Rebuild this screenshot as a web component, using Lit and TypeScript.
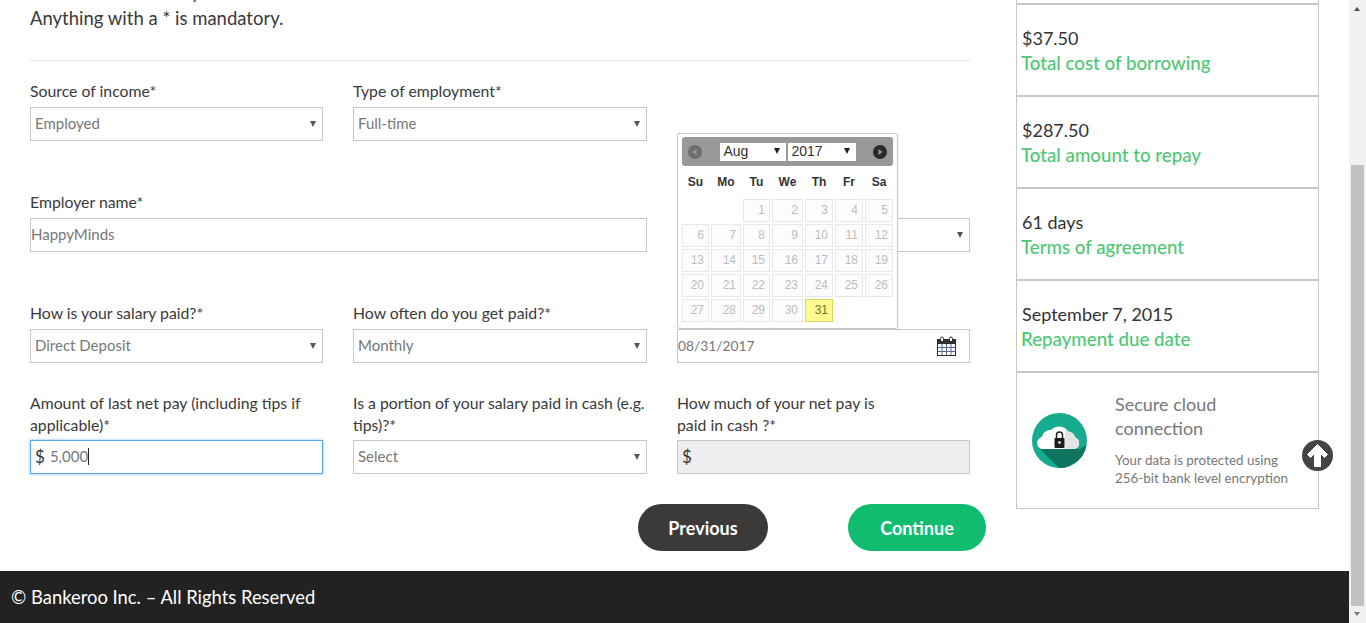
import { LitElement, html, css } from 'lit';
import { customElement } from 'lit/decorators.js';

const WEEKDAYS = ['Su', 'Mo', 'Tu', 'We', 'Th', 'Fr', 'Sa'];
const SUMMARY = [
  { value: '$37.50', label: 'Total cost of borrowing' },
  { value: '$287.50', label: 'Total amount to repay' },
  { value: '61 days', label: 'Terms of agreement' },
  { value: 'September 7, 2015', label: 'Repayment due date' }
];

@customElement('app-root')
export class AppRoot extends LitElement {
  static styles = css`
    :host {
      display: block;
      position: relative;
      height: 623px;
      overflow: hidden;
      background: #fff;
      font-family: "Lato", "Open Sans", sans-serif;
      color: #3a3a3a;
    }
    .page {
      width: 1349px;
      height: 623px;
      display: flex;
      flex-direction: column;
    }
    .content {
      flex: 1;
      min-height: 0;
      display: flex;
      padding-left: 30px;
    }
    .form {
      width: 940px;
    }
    .intro {
      margin: -21px 0 0;
      font-size: 18.5px;
      line-height: 26px;
      padding-bottom: 29px;
      border-bottom: 1px solid #e4e4e4;
    }
    .row {
      display: grid;
      grid-template-columns: 293px 294px 293px;
      column-gap: 30px;
      margin-top: 50px;
    }
    .row.first { margin-top: 19px; }
    .row.tight { margin-top: 29px; }
    .field {
      position: relative;
      display: flex;
      flex-direction: column;
      justify-content: flex-end;
      min-width: 0;
    }
    .wide { grid-column: span 2; }
    label {
      display: block;
      font-size: 15.8px;
      line-height: 22px;
      margin-bottom: 5px;
    }
    .two-line label { margin-bottom: 4px; }
    .control {
      box-sizing: border-box;
      height: 34px;
      border: 1px solid #c8c8c8;
      background: #fff;
      display: flex;
      align-items: center;
      padding: 0 4px 2px;
      font-size: 15px;
      color: #777;
    }
    .control .value { flex: 1; }
    .control.flush { padding-left: 0; }
    .arrow {
      width: 0;
      height: 0;
      border-left: 3px solid transparent;
      border-right: 3px solid transparent;
      border-top: 6px solid #555;
      margin: 2px 2px 0 0;
    }
    .focused {
      border-color: #58a9ee;
      box-shadow: 0 0 3px rgba(88, 169, 238, 0.7);
    }
    .disabled { background: #eee; }
    .dollar {
      font-size: 17px;
      color: #333;
      margin-right: 5px;
    }
    .caret {
      display: inline-block;
      width: 1px;
      height: 17px;
      background: #222;
      vertical-align: -3px;
    }
    .date { padding: 0 13px 0 0; font-size: 13.8px; }
    .date .value { padding-bottom: 2px; }
    .actions {
      display: flex;
      justify-content: flex-end;
      gap: 80px;
      margin-top: 30px;
      margin-right: -16px;
    }
    .btn {
      height: 47px;
      border-radius: 24px;
      display: flex;
      align-items: center;
      justify-content: center;
      color: #fff;
      font-size: 18px;
      font-weight: 700;
    }
    .btn.prev { width: 130px; background: #3b3a38; }
    .btn.next { width: 138px; background: #10bd6e; }
    .datepicker {
      position: absolute;
      left: 0;
      bottom: 34px;
      box-sizing: border-box;
      width: 221px;
      height: 196px;
      padding: 3px 4px;
      background: #fff;
      border: 1px solid #c8c8c8;
      border-radius: 3px;
      box-shadow: 0 0 2px rgba(0, 0, 0, 0.1);
      font-family: "Liberation Sans", Arial, sans-serif;
      z-index: 2;
    }
    .dp-head {
      height: 29px;
      background: #999;
      border-radius: 3px;
      display: flex;
      align-items: center;
      padding: 0 6px;
    }
    .dp-nav {
      width: 14px;
      height: 14px;
      flex: none;
    }
    .dp-selects {
      flex: 1;
      display: flex;
      justify-content: center;
      gap: 2px;
    }
    .dp-select {
      width: 66px;
      height: 18px;
      box-sizing: border-box;
      background: #fff;
      display: flex;
      align-items: center;
      padding: 0 4px 1px;
      font-size: 14px;
      color: #333;
    }
    .dp-select.year { width: 68px; }
    .dp-select span { flex: 1; }
    .dp-select .arrow { margin: 0 2px 0 0; border-top-color: #222; }
    .dp-grid {
      display: grid;
      grid-template-columns: 27px 30px 27px 31px 28px 28px 28px;
      grid-template-rows: 31px;
      grid-auto-rows: 23px;
      gap: 2px;
    }
    .dow {
      font-size: 12px;
      font-weight: 700;
      color: #333;
      text-align: center;
      line-height: 33px;
    }
    .day {
      box-sizing: border-box;
      border: 1px solid #e8e8e8;
      background: #fcfcfc;
      color: #bdbdbd;
      font-size: 12px;
      line-height: 21px;
      text-align: right;
      padding-right: 4px;
    }
    .day.today {
      background: #fffa90;
      border-color: #dad55e;
      color: #777620;
    }
    .sidebar {
      width: 303px;
      margin-left: 46px;
      margin-top: -88px;
    }
    .box {
      box-sizing: border-box;
      height: 92px;
      border: 1px solid #c8c8c8;
      padding: 21px 5px 0;
    }
    .box .val {
      font-size: 18px;
      line-height: 25px;
      color: #333;
    }
    .box .lab {
      font-size: 18.7px;
      line-height: 25px;
      margin-left: -1px;
      color: #4fc775;
      font-weight: 500;
    }
    .secure {
      box-sizing: border-box;
      height: 137px;
      border: 1px solid #c8c8c8;
      display: flex;
      padding: 19px 0 0 15px;
    }
    .secure svg { margin-top: 21px; flex: none; }
    .secure-text { margin-left: 28px; color: #777; }
    .secure-title { font-size: 18px; line-height: 24px; margin-bottom: 11px; }
    .secure-small { font-size: 13.4px; line-height: 18px; }
    footer {
      height: 52px;
      flex: none;
      background: #222;
      color: #fff;
      display: flex;
      align-items: center;
      padding-left: 11px;
      font-size: 18.4px;
    }
    .to-top {
      position: absolute;
      left: 1302px;
      top: 440px;
    }
    .scrollbar {
      position: absolute;
      top: 0;
      right: 0;
      width: 17px;
      height: 623px;
      background: #f1f1f1;
    }
    .thumb {
      position: absolute;
      left: 2px;
      top: 165px;
      width: 13px;
      height: 441px;
      background: #c1c1c1;
    }
    .sb-up, .sb-down {
      position: absolute;
      left: 5px;
      width: 0;
      height: 0;
      border-left: 3.5px solid transparent;
      border-right: 3.5px solid transparent;
    }
    .sb-up { top: 7px; border-bottom: 4px solid #505050; }
    .sb-down { bottom: 7px; border-top: 4px solid #7a7a7a; }
  `;

  private select(label: string, value: string) {
    return html`
      <div class="field">
        <label>${label}</label>
        <div class="control"><span class="value">${value}</span><span class="arrow"></span></div>
      </div>
    `;
  }

  private renderDatepicker() {
    const days = [];
    for (let i = 0; i < 2; i++) days.push(html`<div></div>`);
    for (let d = 1; d <= 31; d++) {
      days.push(html`<div class="day ${d === 31 ? 'today' : ''}">${d}</div>`);
    }
    return html`
      <div class="datepicker">
        <div class="dp-head">
          <svg class="dp-nav" viewBox="0 0 14 14" style="opacity:.35">
            <circle cx="7" cy="7" r="7" fill="#222"></circle>
            <path d="M8.500 4v6l-4-3z" fill="#999"></path>
          </svg>
          <div class="dp-selects">
            <div class="dp-select"><span>Aug</span><i class="arrow"></i></div>
            <div class="dp-select year"><span>2017</span><i class="arrow"></i></div>
          </div>
          <svg class="dp-nav" viewBox="0 0 14 14">
            <circle cx="7" cy="7" r="7" fill="#2a2a2a"></circle>
            <path d="M5.500 4v6l4-3z" fill="#999"></path>
          </svg>
        </div>
        <div class="dp-grid">
          ${WEEKDAYS.map(d => html`<div class="dow">${d}</div>`)}
          ${days}
        </div>
      </div>
    `;
  }

  render() {
    return html`
      <div class="page">
        <div class="content">
          <div class="form">
            <p class="intro">Please tell us about yourself.<br />Anything with a * is mandatory.</p>
            <div class="row first">
              ${this.select('Source of income*', 'Employed')}
              ${this.select('Type of employment*', 'Full-time')}
            </div>
            <div class="row">
              <div class="field wide">
                <label>Employer name*</label>
                <div class="control flush"><span class="value">HappyMinds</span></div>
              </div>
              ${this.select('\u00a0', '')}
            </div>
            <div class="row">
              ${this.select('How is your salary paid?*', 'Direct Deposit')}
              ${this.select('How often do you get paid?*', 'Monthly')}
              <div class="field">
                ${this.renderDatepicker()}
                <div class="control date">
                  <span class="value">08/31/2017</span>
                  <svg width="19" height="20" viewBox="0 0 19 20">
                    <rect x="0.500" y="3.500" width="18" height="16" fill="#fff" stroke="#2f2f2f"></rect>
                    <rect x="0" y="3" width="19" height="5" fill="#2f2f2f"></rect>
                    <path d="M5 8v11M9.500 8v11M14 8v11M1 11.500h17M1 15.500h17" stroke="#55688f"></path>
                    <path d="M3.500 5V2.500a1.500 1.500 0 0 1 3 0V5M12.500 5V2.500a1.500 1.500 0 0 1 3 0V5" fill="#fff" stroke="#2f2f2f"></path>
                  </svg>
                </div>
              </div>
            </div>
            <div class="row tight">
              <div class="field two-line">
                <label>Amount of last net pay (including tips if applicable)*</label>
                <div class="control focused"><span class="dollar">$</span><span class="value">5,000<i class="caret"></i></span></div>
              </div>
              <div class="field two-line">
                <label>Is a portion of your salary paid in cash (e.g. tips)?*</label>
                <div class="control"><span class="value">Select</span><span class="arrow"></span></div>
              </div>
              <div class="field two-line">
                <label>How much of your net pay is<br />paid in cash ?*</label>
                <div class="control disabled"><span class="dollar">$</span></div>
              </div>
            </div>
            <div class="actions">
              <div class="btn prev">Previous</div>
              <div class="btn next">Continue</div>
            </div>
          </div>
          <aside class="sidebar">
            <div class="box"></div>
            ${SUMMARY.map(s => html`
              <div class="box">
                <div class="val">${s.value}</div>
                <div class="lab">${s.label}</div>
              </div>
            `)}
            <div class="secure">
              <svg width="55" height="55" viewBox="0 0 55 55">
                <defs>
                  <clipPath id="cloud-right"><rect x="33" y="0" width="22" height="55"></rect></clipPath>
                </defs>
                <circle cx="27.500" cy="27.500" r="27.500" fill="#17ab90"></circle>
                <path d="M8 36 27 55A27.500 27.500 0 0 0 54.500 32L48 36z" fill="#0f7560"></path>
                <path d="M11 36a6 6 0 0 1-1-11.900a8 8 0 0 1 9-7a10.500 10.500 0 0 1 17 1.500a8 8 0 0 1 7 6a6 6 0 0 1 0 11.400z" fill="#fff"></path>
                <path clip-path="url(#cloud-right)" d="M11 36a6 6 0 0 1-1-11.900a8 8 0 0 1 9-7a10.500 10.500 0 0 1 17 1.500a8 8 0 0 1 7 6a6 6 0 0 1 0 11.400z" fill="#e4e4e4"></path>
                <path d="M24.500 25v-3a3 3 0 0 1 6 0v3" fill="none" stroke="#222" stroke-width="1.500"></path>
                <rect x="22.500" y="25" width="10" height="10" rx="1" fill="#1d1d1d"></rect>
                <circle cx="27.500" cy="29.500" r="1.300" fill="#fff"></circle>
              </svg>
              <div class="secure-text">
                <div class="secure-title">Secure cloud<br />connection</div>
                <div class="secure-small">Your data is protected using<br />256-bit bank level encryption</div>
              </div>
            </div>
          </aside>
        </div>
        <footer>© Bankeroo Inc. – All Rights Reserved</footer>
      </div>
      <svg class="to-top" width="31" height="31" viewBox="0 0 31 31">
        <circle cx="15.500" cy="15.500" r="15.500" fill="#444"></circle>
        <path d="M15.500 4.500 25.500 14.500 22.500 17.500 18.500 13.500V26.500H12.500V13.500L8.500 17.500 5.500 14.500z" fill="#fff" stroke="#fff" stroke-linejoin="round"></path>
      </svg>
      <div class="scrollbar">
        <i class="sb-up"></i>
        <div class="thumb"></div>
        <i class="sb-down"></i>
      </div>
    `;
  }
}
